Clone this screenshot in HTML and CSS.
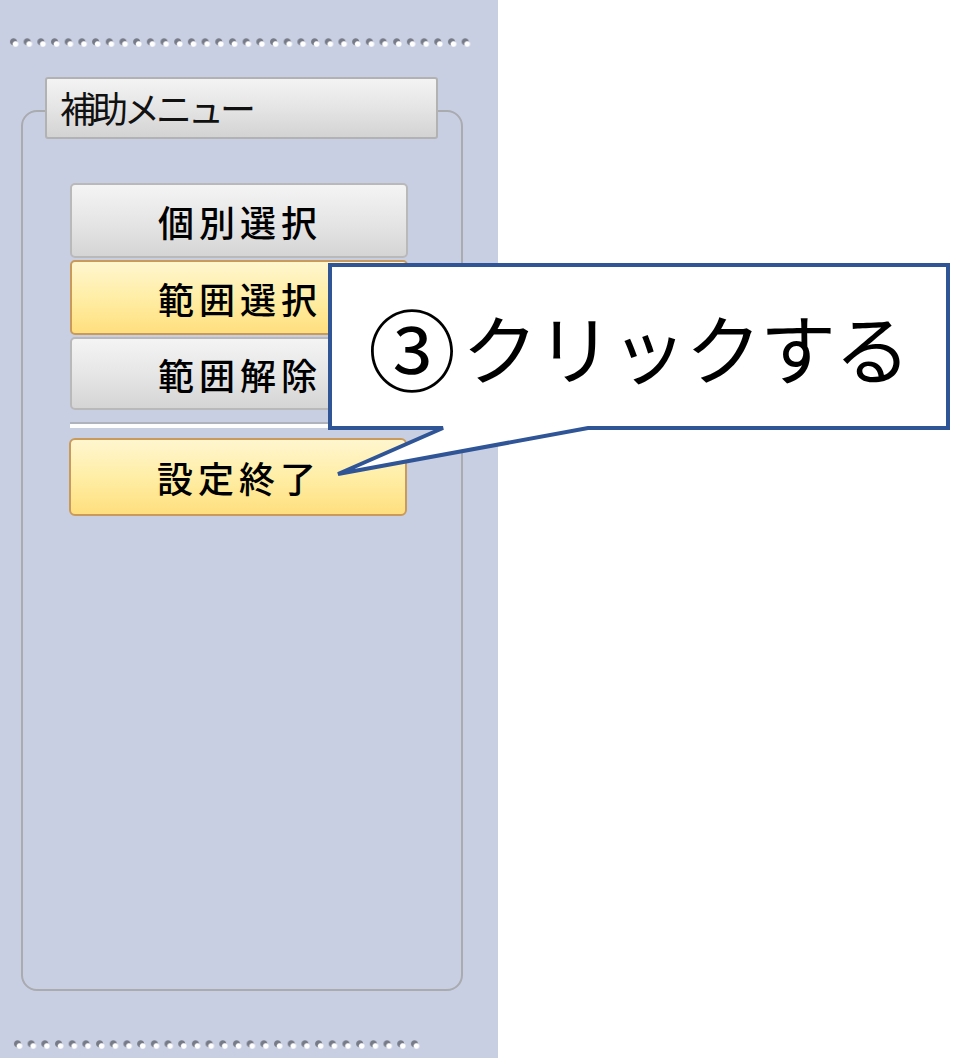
FILE: index.html
```html
<!DOCTYPE html>
<html lang="ja">
<head>
  <meta charset="UTF-8" />
  <meta name="viewport" content="width=device-width, initial-scale=1.0" />
  <title>補助メニュー</title>
  <link rel="stylesheet" href="styles.css">
</head>
<body>
  <div class="side-panel">
    <div class="grip grip-top"></div>

    <div class="group-box">
      <div class="group-title">補助メニュー</div>

      <div class="button-stack">
        <button class="menu-btn">個別選択</button>
        <button class="menu-btn active">範囲選択</button>
        <button class="menu-btn short">範囲解除</button>
      </div>

      <div class="separator"></div>

      <button class="menu-btn active finish">設定終了</button>
    </div>

    <div class="grip grip-bottom"></div>
  </div>

  <div class="callout">
    <svg class="callout-shape" width="640" height="230" viewBox="0 0 640 230">
      <path d="M2 2 H620 V165 H260 L10 211 L115 165 H2 Z" fill="#fff" stroke="#2f5597" stroke-width="4" stroke-linejoin="miter" />
    </svg>
    <div class="callout-text"><span class="step-no">③</span><span class="step-label">クリックする</span></div>
  </div>
</body>
</html>
```

FILE: styles.css
```css
body {
  margin: 0;
  background: #fff;
  font-family: "Noto Sans CJK JP", "Noto Sans", sans-serif;
  position: relative;
  width: 954px;
  height: 1058px;
  overflow: hidden;
}
.side-panel {
  width: 498px;
  height: 1058px;
  background: #c9cfe2;
  display: flex;
  flex-direction: column;
  box-sizing: border-box;
  padding-top: 38px;
}
.grip {
  height: 10px;
  background-image:
    radial-gradient(circle at 8.5px 6px, #ffffff 0, #ffffff 2.2px, transparent 3.4px),
    radial-gradient(circle at 6.5px 3.8px, #767b87 0, #767b87 3px, transparent 4px);
  background-size: 13.7px 10px;
  background-repeat: repeat-x;
}
.grip-top {
  margin-left: 7px;
  width: 468px;
}
.grip-bottom {
  margin-top: 49px;
  margin-left: 11px;
  width: 412px;
}
.group-box {
  margin-top: 62px;
  margin-left: 21px;
  width: 442px;
  height: 881px;
  box-sizing: border-box;
  border: 2px solid #a9abaf;
  border-radius: 16px;
  display: flex;
  flex-direction: column;
}
.group-title {
  margin-top: -35px;
  margin-left: 22px;
  width: 393px;
  height: 62px;
  box-sizing: border-box;
  border: 2px solid #b2b2b2;
  border-radius: 3px;
  background: linear-gradient(#f3f3f3, #e3e3e3 55%, #d3d3d3);
  font-size: 36px;
  letter-spacing: -4px;
  line-height: 56px;
  padding-left: 13px;
  color: #111;
}
.button-stack {
  margin-top: 44px;
  margin-left: 47px;
  width: 338px;
  display: flex;
  flex-direction: column;
  gap: 2px;
}
.menu-btn {
  width: 338px;
  height: 75px;
  box-sizing: border-box;
  border: 2px solid #b9b9b9;
  border-radius: 5px;
  background: linear-gradient(#f4f4f4, #e6e6e6 50%, #d5d5d5);
  font-family: "Noto Sans CJK JP", sans-serif;
  font-size: 36px;
  font-weight: 500;
  letter-spacing: 5px;
  padding: 0 0 0 2px;
  color: #000;
  cursor: pointer;
}
.menu-btn.short {
  height: 73px;
}
.menu-btn.active {
  border-color: #c99a5a;
  background: linear-gradient(#fff6cf, #ffeea6 50%, #ffdf7e);
}
.separator {
  margin-top: 12px;
  margin-left: 47px;
  width: 338px;
  height: 2px;
  background: #aeb2bd;
  border-bottom: 4px solid #fdfdfe;
}
.finish {
  margin-top: 10px;
  margin-left: 46px;
  height: 78px;
  border-radius: 6px;
}
.callout {
  position: absolute;
  left: 330px;
  top: 265px;
  width: 624px;
  height: 215px;
}
.callout-shape {
  position: absolute;
  left: -2px;
  top: -2px;
}
.callout-text {
  position: relative;
  height: 162px;
  padding-left: 38px;
  display: flex;
  align-items: center;
  font-family: "Noto Sans CJK JP", sans-serif;
  font-size: 76px;
  line-height: 1;
  color: #000;
}
.step-no {
  font-size: 88px;
  margin-right: 6px;
}
.step-label {
  letter-spacing: -1.5px;
}
```
